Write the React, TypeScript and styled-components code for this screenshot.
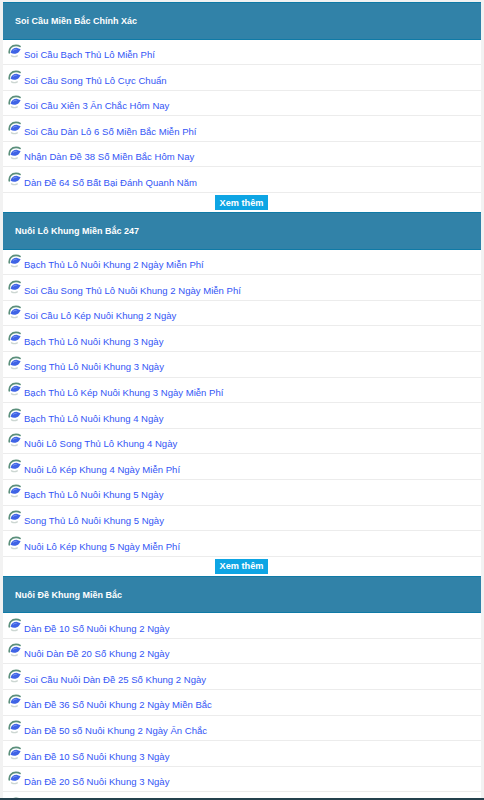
import React from 'react';
import styled, { createGlobalStyle } from 'styled-components';

const GlobalStyle = createGlobalStyle`
  html, body {
    margin: 0;
    padding: 0;
    height: 100%;
    overflow: hidden;
    background: #f2f2f2;
  }
  * {
    box-sizing: border-box;
  }
`;

const Page = styled.div`
  height: 800px;
  display: flex;
  flex-direction: column;
  overflow: hidden;
  font-family: "Liberation Sans", Arial, sans-serif;
`;

const Content = styled.main`
  flex: 1;
  min-height: 0;
  overflow: hidden;
  padding: 2px 3px 0 3px;
`;

const BottomBar = styled.div`
  height: 2px;
  flex: none;
  background: #24414d;
`;

const Panel = styled.section`
  background: #fff;
`;

const PanelTitle = styled.h3`
  margin: 0;
  height: 37.5px;
  padding: 1px 0 0 12px;
  display: flex;
  align-items: center;
  background: #3182a8;
  border-top: 1px solid #0f7aa6;
  border-bottom: 1px solid #0f7aa6;
  color: #fff;
  font-size: 9px;
  font-weight: 700;
`;

const List = styled.ul`
  margin: 0;
  padding: 0;
  list-style: none;
`;

const Row = styled.li`
  height: 25.6px;
  padding: 4.5px 0 0 5px;
  display: flex;
  align-items: flex-start;
  gap: 3px;
  border-bottom: 1px solid #ececec;
`;

const RowLink = styled.a`
  margin-top: 4px;
  color: #3355f5;
  font-size: 9.55px;
  line-height: 13px;
  text-decoration: none;
  white-space: nowrap;
`;

const MoreBar = styled.div`
  height: 19px;
  display: flex;
  justify-content: center;
  align-items: center;
`;

const MoreButton = styled.a`
  height: 15px;
  width: 53px;
  margin-left: -1px;
  display: flex;
  align-items: center;
  justify-content: center;
  background: #0ea5e4;
  color: #fff;
  font-size: 9.2px;
  font-weight: 700;
`;

const Bullet = () => (
  <svg width="13" height="14" viewBox="0 0 13 14" style={{ flex: 'none' }}>
    <path d="M1.3 8.8C0.8 4.4 3.6 1.4 8 1.4c1.6 0 3 .3 4 1" fill="none" stroke="#5b8f7c" strokeWidth="1.7" strokeLinecap="round" />
    <path d="M3.5 11.8c1.6 1 4 1 5.8.1" fill="none" stroke="#ccd6d2" strokeWidth="1.4" strokeLinecap="round" />
    <path d="M2.6 8.8C3.2 5.6 5.6 3.8 8.6 3.8L12.6 5.2 11 7.8C9 10 5.4 10.6 2.6 8.8Z" fill="#3f63e6" />
    <path d="M5 6.6C6 5.6 7.2 5.2 8.6 5.4" fill="none" stroke="#8fa7f2" strokeWidth="0.8" />
  </svg>
);

type PanelData = { title: string; items: string[]; more?: boolean };

const panels: PanelData[] = [
  {
    title: 'Soi Cầu Miền Bắc Chính Xác',
    more: true,
    items: [
      'Soi Cầu Bạch Thủ Lô Miễn Phí',
      'Soi Cầu Song Thủ Lô Cực Chuẩn',
      'Soi Cầu Xiên 3 Ăn Chắc Hôm Nay',
      'Soi Cầu Dàn Lô 6 Số Miền Bắc Miễn Phí',
      'Nhận Dàn Đề 38 Số Miền Bắc Hôm Nay',
      'Dàn Đề 64 Số Bất Bại Đánh Quanh Năm',
    ],
  },
  {
    title: 'Nuôi Lô Khung Miền Bắc 247',
    more: true,
    items: [
      'Bạch Thủ Lô Nuôi Khung 2 Ngày Miễn Phí',
      'Soi Cầu Song Thủ Lô Nuôi Khung 2 Ngày Miễn Phí',
      'Soi Cầu Lô Kép Nuôi Khung 2 Ngày',
      'Bạch Thủ Lô Nuôi Khung 3 Ngày',
      'Song Thủ Lô Nuôi Khung 3 Ngày',
      'Bạch Thủ Lô Kép Nuôi Khung 3 Ngày Miễn Phí',
      'Bạch Thủ Lô Nuôi Khung 4 Ngày',
      'Nuôi Lô Song Thủ Lô Khung 4 Ngày',
      'Nuôi Lô Kép Khung 4 Ngày Miễn Phí',
      'Bạch Thủ Lô Nuôi Khung 5 Ngày',
      'Song Thủ Lô Nuôi Khung 5 Ngày',
      'Nuôi Lô Kép Khung 5 Ngày Miễn Phí',
    ],
  },
  {
    title: 'Nuôi Đề Khung Miền Bắc',
    items: [
      'Dàn Đề 10 Số Nuôi Khung 2 Ngày',
      'Nuôi Dàn Đề 20 Số Khung 2 Ngày',
      'Soi Cầu Nuôi Dàn Đề 25 Số Khung 2 Ngày',
      'Dàn Đề 36 Số Nuôi Khung 2 Ngày Miền Bắc',
      'Dàn Đề 50 số Nuôi Khung 2 Ngày Ăn Chắc',
      'Dàn Đề 10 Số Nuôi Khung 3 Ngày',
      'Dàn Đề 20 Số Nuôi Khung 3 Ngày',
      // only the icon of this row is above the fold
      '',
    ],
  },
];

const App = () => (
  <Page>
    <GlobalStyle />
    <Content>
      {panels.map((panel) => (
        <Panel key={panel.title}>
          <PanelTitle>{panel.title}</PanelTitle>
          <List>
            {panel.items.map((item) => (
              <Row key={item}>
                <Bullet />
                {item && <RowLink href="#">{item}</RowLink>}
              </Row>
            ))}
          </List>
          {panel.more && (
            <MoreBar>
              <MoreButton>Xem thêm</MoreButton>
            </MoreBar>
          )}
        </Panel>
      ))}
    </Content>
    <BottomBar />
  </Page>
);

export default App;
